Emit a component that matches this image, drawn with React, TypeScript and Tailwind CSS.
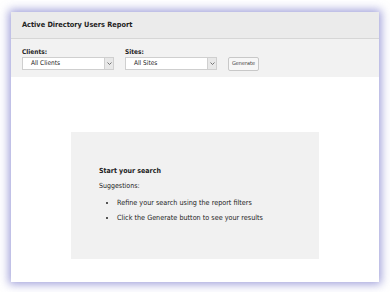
export default function App() {
  return (
    <div className="w-[390px] h-[292px] bg-white pt-3 pl-[11px] font-['DejaVu_Sans_Condensed','DejaVu_Sans',sans-serif] text-[#222]">
      <div className="w-[368px] h-[270px] bg-white flex flex-col shadow-[0_0_9px_2px_rgba(90,90,190,0.6)]">
        <div className="h-[27px] bg-[#ebebeb] border-b border-[#d6d6d6] flex items-center px-[11px]">
          <span className="text-[7.3px] font-bold">Active Directory Users Report</span>
        </div>
        <div className="h-[38px] bg-[#f2f2f2] flex items-start gap-[11px] px-[11px] pt-[8px]">
          <div className="flex flex-col">
            <span className="text-[6.5px] font-bold leading-[10px]">Clients:</span>
            <Select label="All Clients" />
          </div>
          <div className="flex flex-col">
            <span className="text-[6.5px] font-bold leading-[10px]">Sites:</span>
            <Select label="All Sites" />
          </div>
          <button className="mt-[10px] h-[14px] w-[31px] border border-[#c8c8c8] rounded-[2px] bg-[#f7f7f7] text-[5.5px] text-[#444] leading-none">
            Generate
          </button>
        </div>
        <div className="flex-1 flex flex-col items-center pt-[55px]">
          <div className="w-[248px] h-[127px] bg-[#f1f1f1] pl-[28px] pt-[34px]">
            <p className="text-[7px] font-bold leading-[10px]">Start your search</p>
            <p className="text-[7px] leading-[10px] mt-[5px]">Suggestions:</p>
            <ul className="mt-[7px] ml-[18px] list-disc text-[7.2px] leading-[10px] flex flex-col gap-[5px]">
              <li>Refine your search using the report filters</li>
              <li>Click the Generate button to see your results</li>
            </ul>
          </div>
        </div>
      </div>
    </div>
  );
}

function Select({ label }: { label: string }) {
  return (
    <div className="w-[92px] h-[13px] border border-[#cfcfcf] bg-white flex items-center">
      <span className="flex-1 pl-[8px] text-[6.5px] leading-none">{label}</span>
      <span className="w-[9px] h-full bg-[#e8e8e8] border-l border-[#d0d0d0] flex items-center justify-center">
        <svg width="5" height="3" viewBox="0 0 5 3">
          <path d="M0.5 0.5 L2.5 2.5 L4.5 0.5" stroke="#666" strokeWidth="0.9" fill="none" />
        </svg>
      </span>
    </div>
  );
}
